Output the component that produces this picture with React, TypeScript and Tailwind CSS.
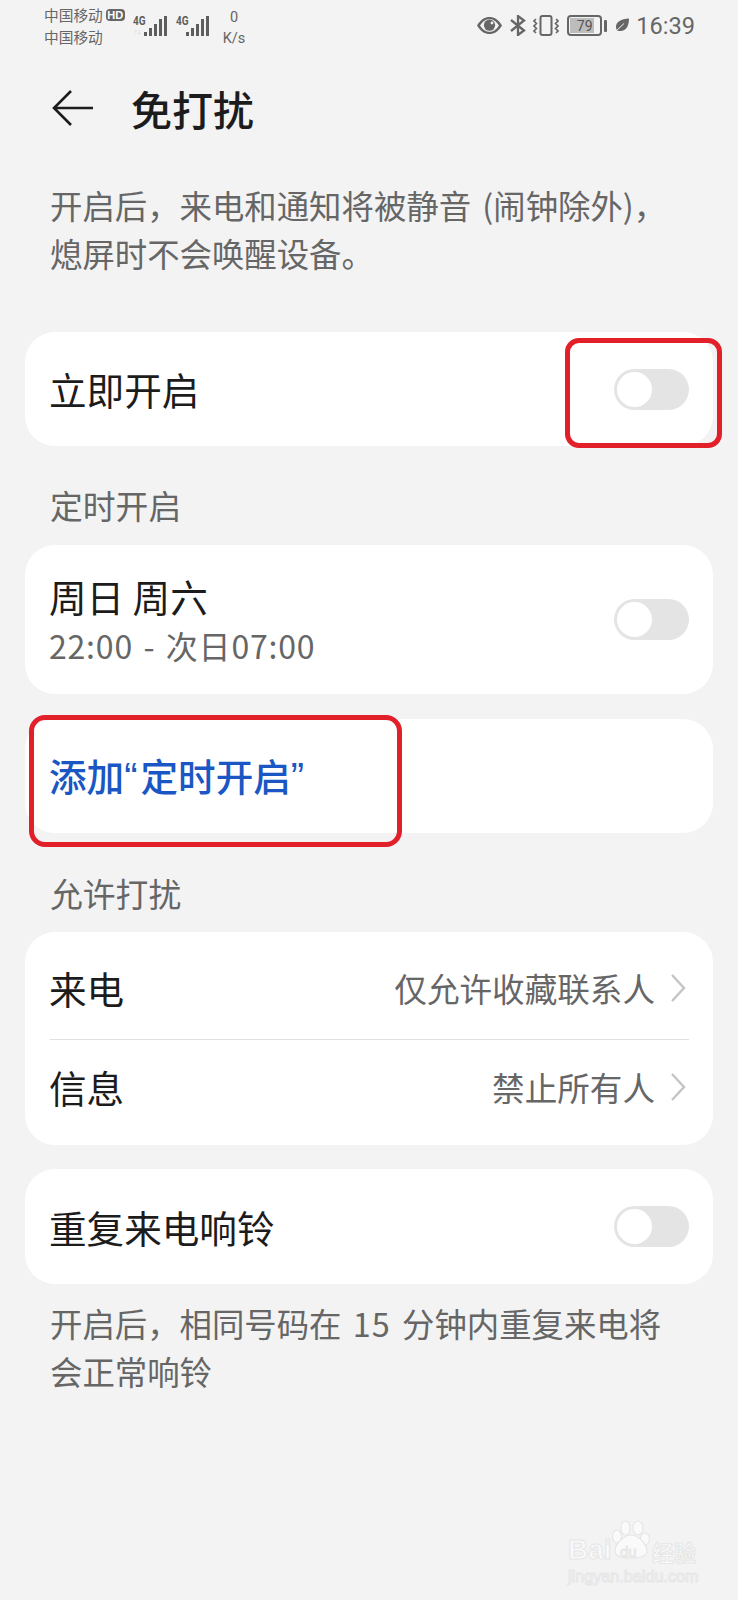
import React from "react";

function Toggle() {
  return (
    <div className="w-[75px] h-[41px] rounded-full bg-[#e4e4e4] p-[3px] flex">
      <div className="w-[35px] h-[35px] rounded-full bg-white" />
    </div>
  );
}

function Chevron() {
  return (
    <svg width="16" height="30" viewBox="0 0 16 30" fill="none" stroke="#c4c4c4" strokeWidth="2.4">
      <path d="M2 2 L14 15 L2 28" />
    </svg>
  );
}

function Signal({ dim, w }: { dim?: boolean; w: string }) {
  const hs = [4, 8, 12, 17, 20];
  return (
    <div className={`relative flex items-end justify-end gap-[2.3px] h-[21px] ${w}`}>
      <span className="absolute left-0 top-0 text-[12.5px] leading-[11px] font-bold text-[#5e5e5e] font-['Roboto',sans-serif] scale-x-[0.8] origin-left">4G</span>
      {dim && <span className="absolute left-[1px] bottom-0 text-[7px] leading-[8px] text-[#c4c4c4] font-['Roboto',sans-serif]">↑↓</span>}
      {hs.map((h, i) => (
        <div key={i} className="w-[2.7px] bg-[#5e5e5e]" style={{ height: h }} />
      ))}
    </div>
  );
}

function StatusBar() {
  return (
    <div className="h-[55px] flex justify-between pl-[44px] pr-[43px] text-[#666666]">
      <div className="flex">
        <div className="flex flex-col text-[14.7px] leading-[22px] pt-[4px] w-[89px]">
          <div className="flex items-center gap-[3px]">
            <span>中国移动</span>
            <span className="bg-[#666666] text-white rounded-[4px] text-[11px] leading-[12px] h-[12px] w-[19px] text-center font-bold font-['Liberation_Sans',sans-serif]">HD</span>
          </div>
          <span>中国移动</span>
        </div>
        <div className="flex gap-[9px] mt-[15px] h-[21px]">
          <Signal dim w="w-[34px]" />
          <Signal w="w-[33px]" />
        </div>
        <div className="flex flex-col items-center w-[26px] ml-[12px] mt-[7px] text-[14.5px] leading-[21px] font-['Roboto',sans-serif]">
          <span>0</span>
          <span>K/s</span>
        </div>
      </div>
      <div className="flex items-center h-[51px]">
        <svg width="25" height="17" viewBox="0 0 25 17">
          <path d="M0 8.5 C4 2 8 0 12.5 0 C17 0 21 2 25 8.5 C21 15 17 17 12.5 17 C8 17 4 15 0 8.5 Z" fill="#666666" />
          <path d="M3 8.5 C6 4 9 2.2 12.5 2.2 C16 2.2 19 4 22 8.5 C19 13 16 14.8 12.5 14.8 C9 14.8 6 13 3 8.5 Z" fill="#f1f3f5" />
          <circle cx="12.5" cy="8.2" r="5.6" fill="#666666" />
          <circle cx="15" cy="6" r="1.4" fill="#f1f3f5" />
        </svg>
        <svg width="16" height="21" viewBox="0 0 16 21" fill="none" stroke="#666666" strokeWidth="2.3" className="ml-[8px]">
          <path d="M1 5 L14 15.5 L8 20 L8 1 L14 5.5 L1 16" />
        </svg>
        <svg width="26" height="21" viewBox="0 0 26 21" fill="none" stroke="#666666" strokeWidth="2" className="ml-[7px]">
          <rect x="7.5" y="1" width="11" height="19" rx="2" />
          <path d="M3 4 L1 6 L3.5 8.5 L1 11 L3.5 13.5 L1 16 L3 18" strokeWidth="1.6" />
          <path d="M23 4 L25 6 L22.5 8.5 L25 11 L22.5 13.5 L25 16 L23 18" strokeWidth="1.6" />
        </svg>
        <div className="relative ml-[8px] w-[35px] h-[21px] border-2 border-[#666666] rounded-[4px] overflow-hidden flex items-center justify-center">
          <div className="absolute left-[1px] top-[1px] bottom-[1px] w-[24px] bg-[#bdbdbd]" />
          <span className="relative text-[14px] leading-[16px] font-['Roboto',sans-serif] text-[#555555]">79</span>
        </div>
        <div className="w-[3px] h-[12px] bg-[#666666] rounded-[1px] ml-[2px]" />
        <svg width="15" height="15" viewBox="0 0 15 15" className="ml-[7px]">
          <path d="M3 12.5 C-0.5 6 5 1 15 0.5 C15 9 11 15 3 12.5 Z" fill="#666666" />
          <path d="M0.5 14.5 L10 5.5" stroke="#f2f3f4" strokeWidth="1" fill="none" />
        </svg>
        <span className="text-[23.6px] leading-[28px] font-['Roboto',sans-serif] ml-[7px]">16:39</span>
      </div>
    </div>
  );
}

function Row({ children, h }: { children: React.ReactNode; h: string }) {
  return <div className={`flex items-center justify-between pl-[24px] pr-[24px] ${h}`}>{children}</div>;
}

export default function App() {
  return (
    <div className="relative w-[738px] h-[1600px] overflow-hidden bg-[#f3f3f4] font-['Noto_Sans_CJK_SC','Noto_Sans',sans-serif]">
      <StatusBar />

      <div className="h-[106px] flex items-center pl-[52px]">
        <svg width="42" height="36" viewBox="0 0 42 36" fill="none" stroke="#1c1c1c" strokeWidth="2.6">
          <path d="M19 1 L2 18 L19 35 M2 18 L41 18" />
        </svg>
        <span className="ml-[37px] text-[41px] leading-[48px] text-[#1c1c1c] font-medium">免打扰</span>
      </div>

      <div className="pl-[50px] mt-[20px] text-[32.4px] leading-[48px] text-[#666666] whitespace-nowrap [word-spacing:4px]">
        <div>开启后，来电和通知将被静音 (闹钟除外)，</div>
        <div>熄屏时不会唤醒设备。</div>
      </div>

      <div className="mx-[25px] mt-[55px] bg-white rounded-[30px]">
        <Row h="h-[114px]">
          <span className="text-[37.6px] text-[#1c1c1c] pt-[1px]">立即开启</span>
          <Toggle />
        </Row>
      </div>

      <div className="pl-[50px] mt-[39px] h-[40px] flex items-center text-[32.8px] text-[#666666]">定时开启</div>

      <div className="mx-[25px] mt-[20px] bg-white rounded-[30px]">
        <Row h="h-[149px]">
          <div className="flex flex-col">
            <span className="text-[37.6px] leading-[50px] text-[#1c1c1c]">周日 周六</span>
            <span className="text-[32px] leading-[46px] pt-[1px] text-[#666666] tracking-[0.8px] [word-spacing:2.5px]">22:00 - 次日07:00</span>
          </div>
          <Toggle />
        </Row>
      </div>

      <div className="mx-[25px] mt-[25px] bg-white rounded-[30px]">
        <Row h="h-[114px] pt-[1px]">
          <span className="text-[37.6px] text-[#1b57c4] font-medium">
            添加<span className="font-['Liberation_Sans',sans-serif] text-[40px] tracking-[3px]">“</span>定时开启<span className="font-['Liberation_Sans',sans-serif] text-[40px]">”</span>
          </span>
        </Row>
      </div>

      <div className="pl-[50px] mt-[40px] h-[40px] flex items-center text-[32.8px] text-[#666666]">允许打扰</div>

      <div className="mx-[25px] mt-[19px] bg-white rounded-[30px]">
        <Row h="h-[107px] pt-[6px]">
          <span className="text-[37.6px] text-[#1c1c1c]">来电</span>
          <div className="flex items-center gap-[15px] mr-[3px]">
            <span className="text-[32.6px] text-[#666666]">仅允许收藏联系人</span>
            <Chevron />
          </div>
        </Row>
        <div className="h-px bg-[#e0e0e0] ml-[25px] mr-[24px]" />
        <Row h="h-[105px] pb-[11px]">
          <span className="text-[37.6px] text-[#1c1c1c]">信息</span>
          <div className="flex items-center gap-[15px] mr-[3px]">
            <span className="text-[32.6px] text-[#666666]">禁止所有人</span>
            <Chevron />
          </div>
        </Row>
      </div>

      <div className="mx-[25px] mt-[24px] bg-white rounded-[30px]">
        <Row h="h-[115px]">
          <span className="text-[37.6px] text-[#1c1c1c] pt-[1px]">重复来电响铃</span>
          <Toggle />
        </Row>
      </div>

      <div className="pl-[50px] mt-[15px] text-[32.4px] leading-[48px] text-[#666666] whitespace-nowrap">
        <div className="[word-spacing:4px]">开启后，相同号码在 <span className="tracking-[1px]">15</span> 分钟内重复来电将</div>
        <div>会正常响铃</div>
      </div>

      <div className="absolute left-[565px] top-[338px] w-[157px] h-[110px] border-[5px] border-[#e2202a] rounded-[14px]" />
      <div className="absolute left-[29px] top-[715px] w-[373px] h-[132px] border-[5px] border-[#e2202a] rounded-[16px]" />

      <div className="absolute left-[568px] top-[1520px] w-[132px] h-[64px] text-[#f9f9f9] [-webkit-text-stroke:1px_#e6e6e6]">
        <svg width="38" height="39" viewBox="0 0 38 39" className="absolute left-[44px] top-0" fill="#fafafa" stroke="#e6e6e6" strokeWidth="1.2">
          <ellipse cx="13.5" cy="8" rx="4.5" ry="7" />
          <ellipse cx="26" cy="8" rx="5" ry="7" />
          <ellipse cx="5" cy="16.5" rx="4.5" ry="6.5" />
          <ellipse cx="33" cy="19" rx="4.5" ry="6" />
          <path d="M19 15 C12 15 3 24 3 31 C3 37 12 38 19 38 C26 38 35 37 35 31 C35 24 26 15 19 15 Z" />
        </svg>
        <span className="absolute left-0 top-[14px] text-[28px] leading-[32px] font-bold font-['Liberation_Sans',sans-serif]">Bai</span>
        <span className="absolute left-[52px] top-[22px] text-[15px] leading-[20px] font-['Liberation_Sans',sans-serif]">du</span>
        <span className="absolute left-[84px] top-[18px] text-[22px] leading-[26px] font-bold">经验</span>
        <span className="absolute left-0 top-[46px] text-[16.2px] leading-[20px] font-['Liberation_Sans',sans-serif] whitespace-nowrap">jingyan.baidu.com</span>
      </div>
    </div>
  );
}
